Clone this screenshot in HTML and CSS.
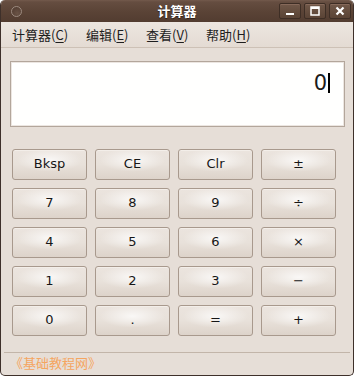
FILE: index.html
```html
<!DOCTYPE html>
<html lang="zh">
<head>
<meta charset="utf-8">
<link rel="stylesheet" href="styles.css">
</head>
<body>
<div class="window">
  <div class="titlebar">
    <span class="tb-menu"></span>
    <span class="title">计算器</span>
    <div class="tb-buttons">
      <span class="tb-btn"><svg width="22" height="16" viewBox="0 0 22 16"><rect x="7" y="10" width="8" height="2" fill="#fff"/></svg></span>
      <span class="tb-btn"><svg width="22" height="16" viewBox="0 0 22 16"><rect x="7" y="4" width="8" height="8" fill="none" stroke="#fff" stroke-width="1.5"/><rect x="7" y="4" width="8" height="2" fill="#fff"/></svg></span>
      <span class="tb-btn"><svg width="22" height="16" viewBox="0 0 22 16"><path d="M7.5 4.5 L14.5 11.5 M14.5 4.5 L7.5 11.5" stroke="#fff" stroke-width="2.2"/></svg></span>
    </div>
  </div>
  <div class="menubar">
    <span class="menu-item m1">计算器(<u>C</u>)</span>
    <span class="menu-item m2">编辑(<u>E</u>)</span>
    <span class="menu-item m3">查看(<u>V</u>)</span>
    <span class="menu-item m4">帮助(<u>H</u>)</span>
  </div>
  <div class="content">
    <div class="display"><span class="value">0</span><span class="cursor"></span></div>
    <div class="keys">
      <button class="key">Bksp</button>
      <button class="key">CE</button>
      <button class="key">Clr</button>
      <button class="key">±</button>
      <button class="key">7</button>
      <button class="key">8</button>
      <button class="key">9</button>
      <button class="key">÷</button>
      <button class="key">4</button>
      <button class="key">5</button>
      <button class="key">6</button>
      <button class="key">×</button>
      <button class="key">1</button>
      <button class="key">2</button>
      <button class="key">3</button>
      <button class="key">−</button>
      <button class="key">0</button>
      <button class="key">.</button>
      <button class="key">=</button>
      <button class="key">+</button>
    </div>
  </div>
  <div class="statusbar">《基础教程网》</div>
</div>
</body>
</html>
```
FILE: styles.css
```css
* { box-sizing: border-box; }
html, body { margin: 0; padding: 0; background: #ffffff; }
body { font-family: "DejaVu Sans", "Noto Sans CJK SC", sans-serif; }

.window {
  width: 354px;
  height: 376px;
  background: #e6ded7;
  border: 1px solid #3e302a;
  border-top: none;
  border-radius: 5px 5px 5px 5px;
  overflow: hidden;
  display: flex;
  flex-direction: column;
}

.titlebar {
  height: 22px;
  flex: none;
  background: linear-gradient(#735a4c 0px, #654d40 2px, #5a4336 12px, #523c30 22px);
  display: flex;
  align-items: center;
  position: relative;
  margin: 0 -1px;
  border-radius: 5px 5px 0 0;
}
.tb-menu {
  width: 11px;
  height: 11px;
  border-radius: 50%;
  border: 1px solid #9c8a7f;
  margin-left: 11px;
  background: radial-gradient(circle at 60% 70%, #6a5346, #4e392e);
}
.title {
  position: absolute;
  left: 0;
  right: 0;
  text-align: center;
  color: #ffffff;
  font-family: "Noto Sans CJK SC", sans-serif;
  font-weight: 700;
  font-size: 13px;
  line-height: 22px;
  text-shadow: 0 1px 1px #2a1d16;
  pointer-events: none;
}
.tb-buttons {
  margin-left: auto;
  margin-right: 3px;
  display: flex;
  gap: 3px;
  position: relative;
}
.tb-btn {
  width: 22px;
  height: 16px;
  border: 1px solid #3e2e25;
  border-radius: 2px;
  background: linear-gradient(#715849, #5a4335);
  box-shadow: inset 0 1px 0 #86695a;
  display: flex;
  align-items: center;
  justify-content: center;
}
.tb-btn svg { display: block; margin: -1px; }

.menubar {
  height: 26px;
  flex: none;
  position: relative;
  border-bottom: 1px solid #cdc1b6;
  background: linear-gradient(#ece6e0, #e4dbd3);
  font-family: "Noto Sans CJK SC", sans-serif;
  font-size: 13px;
  color: #1e1e1e;
  display: flex;
  align-items: center;
}
.menu-item { position: absolute; top: 3px; line-height: 19px; }
.menu-item u { text-underline-offset: 2px; }
.m1 { left: 11px; }
.m2 { left: 85px; }
.m3 { left: 145px; }
.m4 { left: 205px; }

.content {
  flex: 1;
  padding: 13px 8px 0 9px;
}
.display {
  height: 66px;
  background: #fffffe;
  border: 1px solid #b3a69b;
  box-shadow: inset 0 0 0 1px #ece6e1;
  display: flex;
  justify-content: flex-end;
  align-items: flex-start;
  padding: 9px 14px 0 0;
}
.value {
  font-family: "DejaVu Sans", sans-serif;
  font-size: 21px;
  line-height: 24px;
  color: #1a1a1a;
}
.cursor {
  width: 2px;
  height: 20px;
  background: #000;
  margin-top: 2px;
  margin-left: 1px;
}

.keys {
  margin-top: 22px;
  margin-left: 2px;
  display: grid;
  grid-template-columns: repeat(4, 75px);
  grid-auto-rows: 31px;
  column-gap: 8px;
  row-gap: 8px;
}
.key {
  font-family: "DejaVu Sans", sans-serif;
  font-size: 13px;
  color: #161616;
  border: 1px solid #a8998d;
  border-radius: 3px;
  background:
    radial-gradient(ellipse 45% 40% at 50% 35%, rgba(255,255,255,0.75), rgba(255,255,255,0) 100%),
    linear-gradient(#ebe4de 0%, #e8e1da 50%, #ddd3ca 100%);
  box-shadow: inset 0 1px 0 #f3eee9;
  padding: 0 0 2px 0;
  margin: 0;
}

.statusbar {
  flex: none;
  height: 23px;
  margin: 0 3px;
  border-top: 1px solid #c2b5a9;
  color: #f5a560;
  font-family: "Noto Sans CJK SC", sans-serif;
  font-size: 13px;
  line-height: 19px;
  padding-left: 6px;
}
```
